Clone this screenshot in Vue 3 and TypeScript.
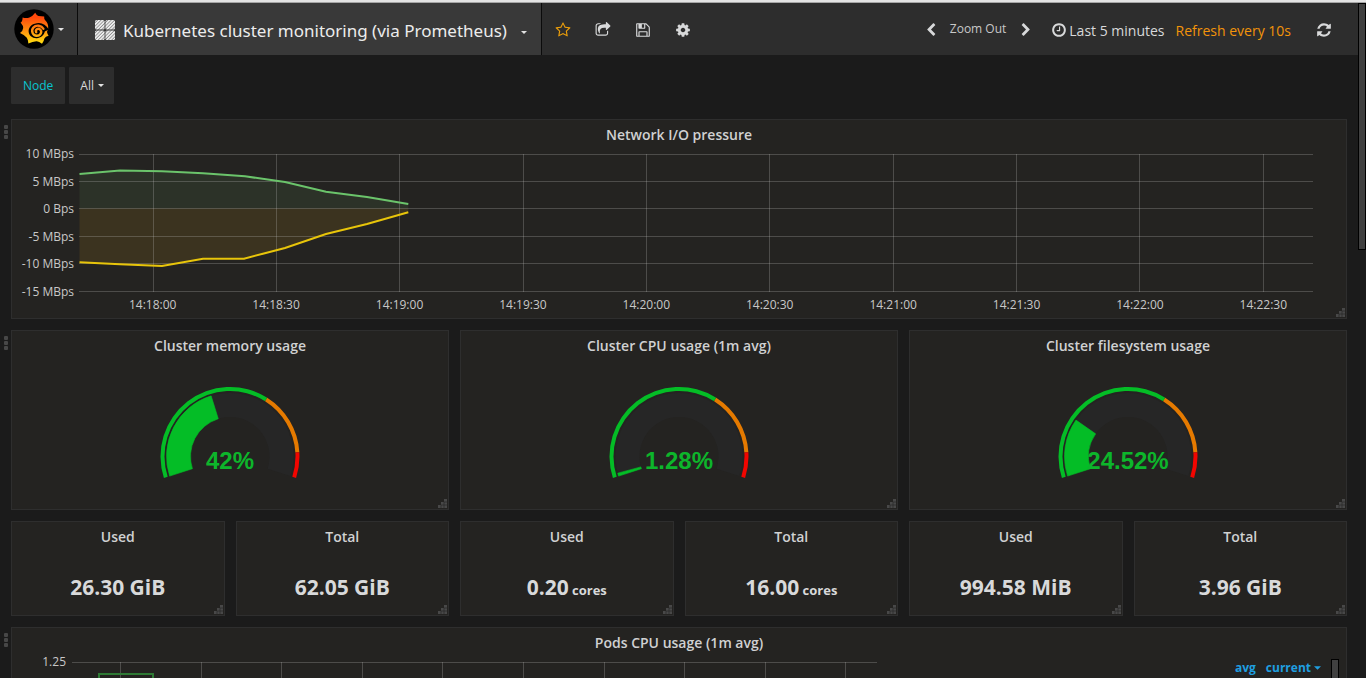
<script setup lang="ts">
interface Gauge { title: string; percent: number; label: string }
interface Stat { title: string; value: string; unit?: string }

const ICONS: Record<string, string> = {
  star: 'M1201 1004l306-297-422-62-189-382-189 382-422 62 306 297-73 421 378-199 377 199zm527-357q0 22-26 48l-363 354 86 500q1 7 1 20 0 50-41 50-19 0-40-12l-449-236-449 236q-22 12-40 12-21 0-31.5-14.5t-10.5-35.5q0-6 2-20l86-500-364-354q-25-27-25-48 0-37 56-46l502-73 225-455q19-41 49-41t49 41l225 455 502 73q56 9 56 46z',
  share: 'M1472 989v259q0 119-84.5 203.5t-203.5 84.5h-832q-119 0-203.5-84.5t-84.5-203.5v-832q0-119 84.5-203.5t203.5-84.5h255q13 0 22.5 9.5t9.5 22.5q0 27-26 32-77 26-133 60-10 4-16 4h-112q-66 0-113 47t-47 113v832q0 66 47 113t113 47h832q66 0 113-47t47-113v-214q0-19 18-29 28-13 54-37 16-16 35-8 21 9 21 29zm237-496l-384 384q-18 19-45 19-12 0-25-5-39-17-39-59v-192h-160q-323 0-438 131-119 137-74 473 3 23-20 34-8 2-12 2-16 0-26-13-10-14-21-31t-39.5-68.5-49.5-99.5-38.5-114-17.5-122q0-49 3.5-91t14-90 28-88 47-81.5 68.5-74 94.5-61.5 124.5-48.5 159.5-30.5 196.5-11h160v-192q0-42 39-59 13-5 25-5 26 0 45 19l384 384q19 19 19 45t-19 45z',
  save: 'M512 1536h768v-384h-768v384zm896 0h128v-896q0-14-10-38.5t-20-34.5l-281-281q-10-10-34-20t-39-10v416q0 40-28 68t-68 28h-576q-40 0-68-28t-28-68v-416h-128v1280h128v-416q0-40 28-68t68-28h832q40 0 68 28t28 68v416zm-384-928v-320q0-13-9.5-22.5t-22.5-9.5h-192q-13 0-22.5 9.5t-9.5 22.5v320q0 13 9.5 22.5t22.5 9.5h192q13 0 22.5-9.5t9.5-22.5zm640 32v928q0 40-28 68t-68 28h-1344q-40 0-68-28t-28-68v-1344q0-40 28-68t68-28h928q40 0 88 20t76 48l280 280q28 28 48 76t20 88z',
  cog: 'M1152 896q0-106-75-181t-181-75-181 75-75 181 75 181 181 75 181-75 75-181zm512-109v222q0 12-8 23t-20 13l-185 28q-19 54-39 91 35 50 107 138 10 12 10 25t-9 23q-27 37-99 108t-94 71q-12 0-26-9l-138-108q-44 23-91 38-16 136-29 186-7 28-36 28h-222q-14 0-24.5-8.5t-11.5-21.5l-28-184q-49-16-90-37l-141 107q-10 9-25 9-14 0-25-11-126-114-165-168-7-10-7-23 0-12 8-23 15-21 51-66.5t54-70.5q-27-50-41-99l-183-27q-13-2-21-12.5t-8-23.5v-222q0-12 8-23t19-13l186-28q14-46 39-92-40-57-107-138-10-12-10-24 0-10 9-23 26-36 98.5-107.5t94.5-71.5q13 0 26 10l138 107q44-23 91-38 16-136 29-186 7-28 36-28h222q14 0 24.5 8.5t11.5 21.5l28 184q49 16 90 37l142-107q9-9 24-9 13 0 25 10 129 119 165 170 7 8 7 22 0 12-8 23-15 21-51 66.5t-54 70.5q26 50 41 98l183 28q13 2 21 12.5t8 23.5z',
  refresh: 'M1639 1056q0 5-1 7-64 268-268 434.5t-478 166.5q-146 0-282.5-55t-243.5-157l-129 129q-19 19-45 19t-45-19-19-45v-448q0-26 19-45t45-19h448q26 0 45 19t19 45-19 45l-137 137q71 66 161 102t187 36q134 0 250-65t186-179q11-17 53-117 8-23 30-23h192q13 0 22.5 9.5t9.5 22.5zm25-800v448q0 26-19 45t-45 19h-448q-26 0-45-19t-19-45 19-45l138-138q-148-137-349-137-134 0-250 65t-186 179q-11 17-53 117-8 23-30 23h-199q-13 0-22.5-9.5t-9.5-22.5v-7q65-268 270-434.5t480-166.5q146 0 284 55.5t245 156.5l130-129q19-19 45-19t45 19 19 45z',
  clock: 'M1024 544v448q0 14-9 23t-23 9h-320q-14 0-23-9t-9-23v-64q0-14 9-23t23-9h224v-352q0-14 9-23t23-9h64q14 0 23 9t9 23zm416 352q0-148-73-273t-198-198-273-73-273 73-198 198-73 273 73 273 198 198 273 73 273-73 198-198 73-273zm224 0q0 209-103 385.5t-279.5 279.5-385.5 103-385.5-103-279.5-279.5-103-385.5 103-385.5 279.5-279.5 385.5-103 385.5 103 279.5 279.5 103 385.5z',
  prev: 'M1427 301l-531 531 531 531q19 19 19 45t-19 45l-166 166q-19 19-45 19t-45-19l-742-742q-19-19-19-45t19-45l742-742q19-19 45-19t45 19l166 166q19 19 19 45t-19 45z',
  next: 'M1363 877l-742 742q-19 19-45 19t-45-19l-166-166q-19-19-19-45t19-45l531-531-531-531q-19-19-19-45t19-45l166-166q19-19 45-19t45 19l742 742q19 19 19 45t-19 45z',
}

/** Triangle of dots shown in the lower right corner of every panel. */
const GRIP = 'M6 0h3v3h-3zM3 3h3v3h-3zM6 3h3v3h-3zM0 6h3v3h-3zM3 6h3v3h-3zM6 6h3v3h-3z'
const GRIP_GAPS = 'M3 6v3M6 3v6M3 6h6M6 3h3'

const actions = [
  { icon: 'star', label: 'Mark as favorite' },
  { icon: 'share', label: 'Share dashboard' },
  { icon: 'save', label: 'Save dashboard' },
  { icon: 'cog', label: 'Settings' },
]

const yLabels = ['10 MBps', '5 MBps', '0 Bps', '-5 MBps', '-10 MBps', '-15 MBps']
const yLines = [0.5, 27.5, 54.5, 82.5, 109.5, 137.5]
const xLabels = ['14:18:00', '14:18:30', '14:19:00', '14:19:30', '14:20:00', '14:20:30', '14:21:00', '14:21:30', '14:22:00', '14:22:30']
const xLines = xLabels.map((_, i) => Math.floor(74 + i * 123.34) + 0.5)

const received = '0.5,20 41,16.5 83,17.3 124,19.3 166,22.3 206,28 247,37.7 288,43 329.3,50'
const sent = '0.5,108.3 41,110.2 83,112 124,104.7 165,104.7 206,94 247,80 288,70 329.3,58.3'

const podLines = Array.from({ length: 10 }, (_, i) => Math.round(48 + i * 80.6) + 0.5)

const gauges: Gauge[] = [
  { title: 'Cluster memory usage', percent: 42, label: '42%' },
  { title: 'Cluster CPU usage (1m avg)', percent: 1.28, label: '1.28%' },
  { title: 'Cluster filesystem usage', percent: 24.52, label: '24.52%' },
]

const stats: Stat[] = [
  { title: 'Used', value: '26.30 GiB' },
  { title: 'Total', value: '62.05 GiB' },
  { title: 'Used', value: '0.20', unit: 'cores' },
  { title: 'Total', value: '16.00', unit: 'cores' },
  { title: 'Used', value: '994.58 MiB' },
  { title: 'Total', value: '3.96 GiB' },
]

const CX = 70
const CY = 69.5

/** Annular sector between two percentages of the 216° dial. */
function band(from: number, to: number, inner: number, outer: number): string {
  const rad = (p: number) => ((162 + p * 2.16) * Math.PI) / 180
  const at = (r: number, p: number) => `${CX + r * Math.cos(rad(p))} ${CY + r * Math.sin(rad(p))}`
  const large = (to - from) * 2.16 > 180 ? 1 : 0
  return `M${at(outer, from)}A${outer} ${outer} 0 ${large} 1 ${at(outer, to)}L${at(inner, to)}A${inner} ${inner} 0 ${large} 0 ${at(inner, from)}Z`
}
</script>

<template>
  <div class="app">
    <div class="strip"></div>
    <div class="viewport">
      <div class="page">
        <header class="navbar">
          <button class="brand" type="button" aria-label="Main menu">
            <svg class="logo" viewBox="0 0 40 40">
              <defs>
                <linearGradient id="flame" gradientUnits="userSpaceOnUse" x1="0" y1="4" x2="0" y2="34">
                  <stop offset="0.15" stop-color="#ff4a0c" />
                  <stop offset="0.55" stop-color="#ff8a0f" />
                  <stop offset="1" stop-color="#ffdc10" />
                </linearGradient>
              </defs>
              <circle cx="20" cy="20" r="19.7" fill="#000" />
              <path fill="url(#flame)" d="M21.2 3.8Q22.5 6.4 24.4 7L30.2 7.4Q29.8 9.6 31.4 11.6Q34.4 14 34.2 19.4L33 23Q33.4 25 34.6 26.8Q31.4 27.6 30.4 29.4Q29.8 32.6 28 34.8Q25 32 22.4 32.2Q18.6 32.4 14.4 34.6Q14.4 31.2 12.8 28.8Q10 25.6 6 24Q9 21.8 9.2 19Q9.4 17 6.6 13.6Q8.6 12.4 8.6 8.4Q12.4 9.4 15.4 8.4Q19 7 21.2 3.8Z" />
              <path fill="#000" d="M34.8 20.6C32.4 16.2 29 14 24.8 14C19 14 14.6 17.6 14.6 22C14.6 26.4 18.4 29.4 22.8 29.2C26.8 29 29.8 26.6 30.8 22.6Z" />
              <path fill="none" stroke="url(#flame)" stroke-width="2.4" stroke-linecap="round" d="M22.2 23.2C21 20.6 23.8 18.8 26 20.4C28.6 22.6 26.6 26.8 22.8 26.8C18.6 26.6 16.8 21.8 19.4 18.6C22.2 15.4 27.6 16.4 29.4 19.8" />
            </svg>
            <svg class="caret" viewBox="0 0 6 3"><path d="M0 0h6L3 3z" /></svg>
          </button>
          <button class="dash-title" type="button">
            <svg class="grid-icon" viewBox="0 0 20 20">
              <defs>
                <pattern id="hatch" width="2.4" height="2.4" patternUnits="userSpaceOnUse" patternTransform="rotate(45)">
                  <rect width="2.4" height="2.4" fill="#8c8c8c" />
                  <rect width="1.5" height="2.4" fill="#f2f2f2" />
                </pattern>
              </defs>
              <g fill="url(#hatch)">
                <rect x="0" y="0" width="9.6" height="9.6" rx="1.6" />
                <rect x="10.4" y="0" width="9.6" height="9.6" rx="1.6" />
                <rect x="0" y="10.4" width="9.6" height="9.6" rx="1.6" />
                <rect x="10.4" y="10.4" width="9.6" height="9.6" rx="1.6" />
              </g>
            </svg>
            <span>Kubernetes cluster monitoring (via Prometheus)</span>
            <svg class="caret title-caret" viewBox="0 0 6 3"><path d="M0 0h6L3 3z" /></svg>
          </button>
          <div class="actions">
            <button v-for="a in actions" :key="a.icon" type="button" :class="['icon-btn', a.icon]" :aria-label="a.label">
              <svg class="icon" viewBox="0 0 1792 1792"><path :d="ICONS[a.icon]" /></svg>
            </button>
          </div>
          <div class="time">
            <button type="button" aria-label="Shift time back"><svg class="icon" viewBox="0 0 1792 1792"><path :d="ICONS.prev" /></svg></button>
            <button type="button" class="zoom-out">Zoom Out</button>
            <button type="button" aria-label="Shift time forward"><svg class="icon" viewBox="0 0 1792 1792"><path :d="ICONS.next" /></svg></button>
            <button type="button" class="range">
              <svg class="icon clock" viewBox="0 0 1792 1792"><path :d="ICONS.clock" /></svg>
              <span>Last 5 minutes</span>
              <span class="every">Refresh every 10s</span>
            </button>
            <button type="button" aria-label="Refresh"><svg class="icon big" viewBox="0 0 1792 1792"><path :d="ICONS.refresh" /></svg></button>
          </div>
        </header>

        <div class="submenu">
          <label class="var-name" for="node">Node</label>
          <div class="var-value">
            <select id="node"><option>All</option></select>
            <svg class="caret var-caret" viewBox="0 0 6 3"><path d="M0 0h6L3 3z" /></svg>
          </div>
        </div>

        <main>
          <section class="row">
            <div class="handle"><i></i><i></i><i></i></div>
            <div class="panel wide">
              <h2>Network I/O pressure</h2>
              <div class="chart">
                <div class="y-axis"><span v-for="l in yLabels" :key="l">{{ l }}</span></div>
                <div class="plot">
                  <svg viewBox="0 0 1234 138" preserveAspectRatio="none">
                    <polygon fill="#73bf6e" fill-opacity="0.1" :points="`0.5,54.5 ${received} 329.3,54.5`" />
                    <polygon fill="#e5ac0e" fill-opacity="0.12" :points="`0.5,54.5 ${sent} 329.3,54.5`" />
                    <g class="grid">
                      <line v-for="y in yLines" :key="y" x1="0" x2="1234" :y1="y" :y2="y" />
                      <line v-for="x in xLines" :key="x" :x1="x" :x2="x" y1="0" y2="138" />
                    </g>
                    <polyline class="line green" :points="received" />
                    <polyline class="line yellow" :points="sent" />
                  </svg>
                  <div class="x-axis"><span v-for="l in xLabels" :key="l">{{ l }}</span></div>
                </div>
              </div>
              <svg class="resize" viewBox="0 0 9 9"><path :d="GRIP" /><path class="gaps" :d="GRIP_GAPS" /></svg>
            </div>
          </section>

          <section class="row">
            <div class="handle"><i></i><i></i><i></i></div>
            <div class="cells">
              <div v-for="g in gauges" :key="g.title" class="panel gauge">
                <h2>{{ g.title }}</h2>
                <div class="gauge-body">
                  <svg viewBox="0 0 140 92" role="img" :aria-label="g.label">
                    <path :d="band(0, 100, 39.5, 63.5)" fill="#262626" />
                    <path :d="band(0, g.percent, 39.5, 63.5)" fill="#04bd26" stroke="#04bd26" stroke-width="0.6" />
                    <path :d="band(0, 65, 65.5, 69.5)" fill="#04bd26" />
                    <path :d="band(65, 90, 65.5, 69.5)" fill="#e57a00" />
                    <path :d="band(90, 100, 65.5, 69.5)" fill="#f20500" />
                    <text :x="CX" y="82" text-anchor="middle">{{ g.label }}</text>
                  </svg>
                </div>
                <svg class="resize" viewBox="0 0 9 9"><path :d="GRIP" /><path class="gaps" :d="GRIP_GAPS" /></svg>
              </div>
              <div v-for="(s, i) in stats" :key="i" class="panel stat">
                <h2>{{ s.title }}</h2>
                <p class="value">{{ s.value }}<small v-if="s.unit">{{ ' ' + s.unit }}</small></p>
                <svg class="resize" viewBox="0 0 9 9"><path :d="GRIP" /><path class="gaps" :d="GRIP_GAPS" /></svg>
              </div>
            </div>
          </section>

          <section class="row">
            <div class="handle"><i></i><i></i><i></i></div>
            <div class="panel wide">
              <h2>Pods CPU usage (1m avg)</h2>
              <div class="pods">
                <span class="pods-y">1.25</span>
                <div class="pods-plot">
                  <svg viewBox="0 0 805 138" preserveAspectRatio="none">
                    <g class="grid">
                      <line x1="0" x2="805" y1="0.5" y2="0.5" />
                      <line v-for="x in podLines" :key="x" :x1="x" :x2="x" y1="0" y2="138" />
                    </g>
                    <polyline class="line pod" points="27,138 27,12 81,12 81,138" />
                  </svg>
                </div>
                <div class="legend">
                  <button type="button">avg</button>
                  <button type="button">current<svg class="caret sort" viewBox="0 0 8 4"><path d="M0 0h8L4 4z" /></svg></button>
                  <div class="legend-scroll"></div>
                </div>
              </div>
            </div>
          </section>
        </main>
      </div>
      <div class="scroll-track"><div class="scroll-thumb"></div></div>
    </div>
  </div>
</template>

<style>
body { background: #1b1b1b; overflow: hidden; }
</style>

<style scoped>
* { box-sizing: border-box; }
.app { height: 100vh; display: flex; flex-direction: column; overflow: hidden; background: #1b1b1b; color: #d8d9da; font-family: "Open Sans", "Noto Sans", sans-serif; font-size: 14px; }
.strip { flex: none; height: 3px; background: #e4e4e4; border-bottom: 1px solid #a6a6a6; }
.viewport { flex: 1; min-height: 0; display: flex; }
.page { flex: 1; min-width: 0; }
.scroll-track { flex: none; width: 8px; }
.scroll-thumb { height: 247px; background: #404040; border: 1px solid #000; }
button, select { font: inherit; color: inherit; background: none; border: 0; padding: 0; margin: 0; cursor: pointer; }
svg { display: block; }
.icon { width: 14px; height: 14px; fill: #d8d9da; }
.icon.big { width: 16px; height: 16px; }
.caret { width: 6px; height: 3px; fill: #e3e3e3; }

.navbar { display: flex; height: 52px; background: #2d2d2d; }
.brand { display: flex; align-items: center; gap: 4px; padding-left: 14px; width: 78px; background: #363636; border-right: 1px solid #0b0b0b; }
.logo { width: 40px; height: 40px; }
.dash-title { display: flex; align-items: center; padding: 2px 14px 0 17px; background: #393939; border-right: 1px solid #0b0b0b; font-family: "Noto Sans", "Open Sans", sans-serif; font-size: 17px; color: #ececec; white-space: nowrap; }
.grid-icon { width: 20px; height: 20px; margin-right: 8px; }
.title-caret { margin: 4px 0 0 14px; }
.actions { display: flex; align-items: center; padding: 2px 0 0 1px; }
.icon-btn { width: 40px; height: 40px; display: flex; align-items: center; justify-content: center; }
.icon-btn .icon { width: 16px; height: 16px; }
.star .icon { fill: #eb9e0b; }
.time { margin-left: auto; display: flex; align-items: center; padding: 2px 26px 0 0; }
.zoom-out { font-size: 12px; line-height: 16px; margin: 0 13px 2px 12px; color: #c8c8c8; }
.range { display: flex; align-items: center; margin: 0 25px 0 18px; }
.range .clock { width: 16px; height: 16px; margin-right: 2px; }
.every { margin-left: 11px; color: #f2940a; }

.submenu { display: flex; gap: 4px; padding: 12px 11px 15px; font-size: 12px; line-height: 37px; }
.var-name, .var-value { background: #2d2d2d; border-radius: 1px; }
.var-name { padding: 0 12px; color: #08c4d0; }
.var-value { position: relative; width: 45px; }
.var-value select { appearance: none; width: 100%; height: 37px; padding-left: 11px; }
.var-caret { position: absolute; right: 10px; top: 17px; pointer-events: none; }

main { display: flex; flex-direction: column; gap: 11px; padding-right: 11px; }
.row { display: flex; }
.handle { flex: none; width: 11px; padding: 6px 0 0 4px; display: flex; flex-direction: column; gap: 1px; }
.handle i { width: 4px; height: 4px; border-radius: 1px; background: #474747; }
.panel { position: relative; background: #242321; border: 1px solid #2e2e2e; padding-top: 5px; }
.wide { flex: 1; min-width: 0; padding-bottom: 5px; }
h2 { margin: 0; font-size: 14px; line-height: 20px; font-weight: 600; text-align: center; color: #d0d1d2; }
.resize { position: absolute; right: 1px; bottom: 1px; width: 9px; height: 9px; fill: #484848; }
.gaps { stroke: #242321; stroke-width: 0.6; }

.chart { display: flex; margin-top: 1px; padding-right: 33px; font-size: 12px; line-height: 16px; color: #c8c8c8; }
.y-axis { flex: none; width: 62px; height: 154px; display: flex; flex-direction: column; justify-content: space-between; text-align: right; }
.plot { flex: 1; min-width: 0; padding: 8px 0 0 5px; }
.plot svg { width: 100%; height: 138px; }
.grid line { stroke: #c8c8c8; stroke-opacity: 0.25; stroke-width: 1; vector-effect: non-scaling-stroke; }
.line { fill: none; stroke-width: 2; vector-effect: non-scaling-stroke; }
.green { stroke: #6bc46b; }
.yellow { stroke: #e8c50a; }
.pod { stroke: #2f7a35; }
.x-axis { display: flex; margin: 5px -12px 0 12px; }
.x-axis span { flex: 1; text-align: center; }

.cells { flex: 1; min-width: 0; display: grid; grid-template-columns: repeat(6, 1fr); gap: 11px; }
.gauge { grid-column: span 2; min-height: 180px; display: flex; flex-direction: column; }
.gauge-body { flex: 1; display: flex; align-items: center; justify-content: center; }
.gauge-body svg { width: 140px; height: 92px; }
.gauge-body text { font: bold 24px "Liberation Sans", Arial, sans-serif; fill: #0db52b; }
.stat { min-height: 95px; }
.value { margin: 24px 0 0; text-align: center; font-size: 21px; line-height: 32px; font-weight: 700; }
.value small { font-size: 13px; }

.pods { display: grid; grid-template-columns: 54px 811fr 469fr; margin-top: 1px; height: 150px; }
.pods-y { font-size: 12px; line-height: 16px; text-align: right; color: #c8c8c8; }
.pods-plot { padding: 8px 0 0 6px; }
.pods-plot svg { width: 100%; height: 138px; }
.legend { display: flex; justify-content: flex-end; align-items: flex-start; gap: 10px; padding: 5px 7px 0 0; font-size: 12px; font-weight: 700; line-height: 18px; color: #1f9fe0; }
.legend button { display: flex; align-items: center; }
.sort { width: 7px; height: 4px; margin-left: 3px; fill: #1f9fe0; }
.legend-scroll { width: 8px; height: 120px; background: #404040; border: 1px solid #000; }
</style>
